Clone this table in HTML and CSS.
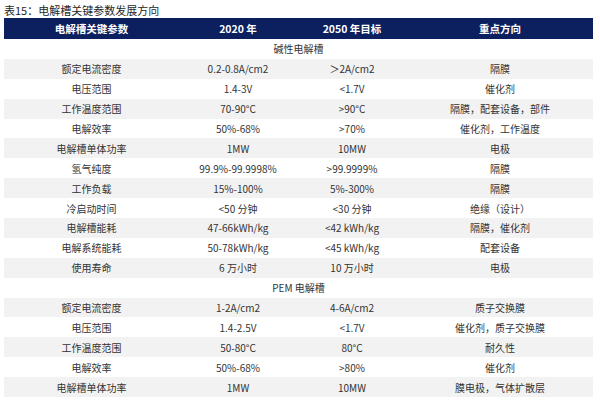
FILE: index.html
```html
<!DOCTYPE html>
<html lang="zh">
<head>
<meta charset="utf-8">
<link rel="stylesheet" href="styles.css">
</head>
<body>
<div class="page">
  <div class="title">表15：电解槽关键参数发展方向</div>
  <table class="params">
    <colgroup>
      <col class="c1"><col class="c2"><col class="c3"><col class="c4">
    </colgroup>
    <thead>
      <tr><th>电解槽关键参数</th><th>2020 年</th><th>2050 年目标</th><th>重点方向</th></tr>
    </thead>
    <tbody>
      <tr class="sec"><td colspan="4">碱性电解槽</td></tr>
      <tr><td>额定电流密度</td><td>0.2-0.8A/cm2</td><td>＞2A/cm2</td><td>隔膜</td></tr>
      <tr><td>电压范围</td><td>1.4-3V</td><td>&lt;1.7V</td><td>催化剂</td></tr>
      <tr><td>工作温度范围</td><td>70-90°C</td><td>&gt;90°C</td><td>隔膜，配套设备，部件</td></tr>
      <tr><td>电解效率</td><td>50%-68%</td><td>&gt;70%</td><td>催化剂，工作温度</td></tr>
      <tr><td>电解槽单体功率</td><td>1MW</td><td>10MW</td><td>电极</td></tr>
      <tr><td>氢气纯度</td><td>99.9%-99.9998%</td><td>&gt;99.9999%</td><td>隔膜</td></tr>
      <tr><td>工作负载</td><td>15%-100%</td><td>5%-300%</td><td>隔膜</td></tr>
      <tr><td>冷启动时间</td><td>&lt;50 分钟</td><td>&lt;30 分钟</td><td>绝缘（设计）</td></tr>
      <tr><td>电解槽能耗</td><td>47-66kWh/kg</td><td>&lt;42 kWh/kg</td><td>隔膜，催化剂</td></tr>
      <tr><td>电解系统能耗</td><td>50-78kWh/kg</td><td>&lt;45 kWh/kg</td><td>配套设备</td></tr>
      <tr><td>使用寿命</td><td>6 万小时</td><td>10 万小时</td><td>电极</td></tr>
      <tr class="sec"><td colspan="4">PEM 电解槽</td></tr>
      <tr><td>额定电流密度</td><td>1-2A/cm2</td><td>4-6A/cm2</td><td>质子交换膜</td></tr>
      <tr><td>电压范围</td><td>1.4-2.5V</td><td>&lt;1.7V</td><td>催化剂，质子交换膜</td></tr>
      <tr><td>工作温度范围</td><td>50-80°C</td><td>80°C</td><td>耐久性</td></tr>
      <tr><td>电解效率</td><td>50%-68%</td><td>&gt;80%</td><td>催化剂</td></tr>
      <tr><td>电解槽单体功率</td><td>1MW</td><td>10MW</td><td>膜电极，气体扩散层</td></tr>
    </tbody>
  </table>
</div>
</body>
</html>
```
FILE: styles.css
```css
html, body {
  margin: 0;
  padding: 0;
  background: #ffffff;
}
.page {
  padding: 3px 0 0 4px;
  font-family: "Noto Sans CJK SC", "Noto Sans", sans-serif;
  color: #333333;
}
.title {
  font-size: 11px;
  line-height: 15px;
  height: 15px;
  color: #262626;
}
.params {
  border-collapse: collapse;
  table-layout: fixed;
  width: 589px;
}
.c1 { width: 175px; }
.c2 { width: 118px; }
.c3 { width: 110px; }
.c4 { width: 186px; }
.params th {
  background: #0c1f5e;
  color: #ffffff;
  font-weight: bold;
  font-size: 10.5px;
  height: 21px;
  padding: 0;
  text-align: center;
  vertical-align: middle;
}
.params td {
  font-size: 10px;
  height: 19.9px;
  padding: 0;
  text-align: center;
  vertical-align: middle;
  white-space: nowrap;
}
.params tbody tr:nth-child(even) td {
  background: #f2f2f2;
}
.params tr.sec td {
  background: #ffffff;
  color: #333333;
}
```
